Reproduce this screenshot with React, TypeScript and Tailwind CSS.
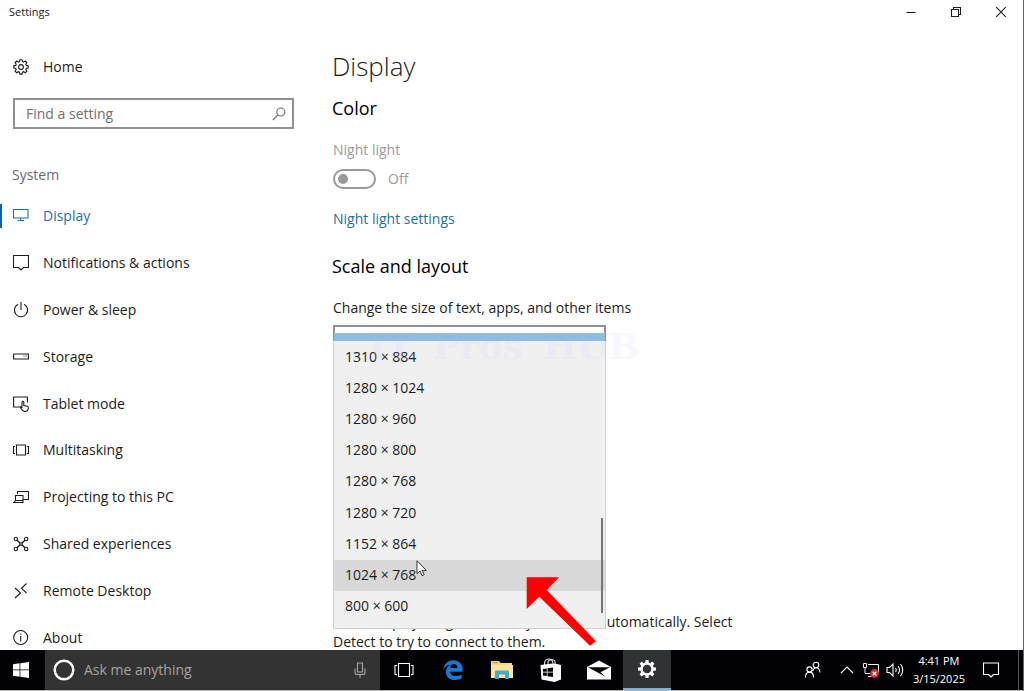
import { useState } from 'react';
import type { ReactNode } from 'react';

interface NavItem {
    name: string;
    icon: ReactNode;
}

interface IconProps {
    children: ReactNode;
    size?: number;
}

function LineIcon({ children, size = 16 }: IconProps) {
    return (
        <svg width={size} height={size} viewBox={`0 0 ${size} ${size}`} fill="none" stroke="currentColor" strokeWidth="1.1" className="shrink-0" aria-hidden="true">
            {children}
        </svg>
    );
}

const gearPath = "M6.9 .7h2.2l.4 1.9 1.2.5 1.6-1.1 1.6 1.6-1.1 1.6.5 1.2 1.9.4v2.2l-1.9.4-.5 1.2 1.1 1.6-1.6 1.6-1.6-1.1-1.2.5-.4 1.9H6.9l-.4-1.9-1.2-.5-1.6 1.1-1.6-1.6 1.1-1.6-.5-1.2-1.9-.4V6.8l1.9-.4.5-1.2-1.1-1.6 1.6-1.6 1.6 1.1 1.2-.5z";

const navItems: NavItem[] = [
    { name: 'Display', icon: <LineIcon><path d="M.5 1.5h14.5v8.5H.5zM7.7 10v2.5M4.5 12.5h6.500" /></LineIcon> },
    { name: 'Notifications & actions', icon: <LineIcon><path d="M.5 .5h15v12h-5L8 15 5.5 12.500h-5z" /></LineIcon> },
    { name: 'Power & sleep', icon: <LineIcon><path d="M8 0v8M5 2.2a6.600 6.600 0 1 0 6 0" /></LineIcon> },
    { name: 'Storage', icon: <LineIcon><path d="M.6 5h14.800v5H.6z" /><path d="M10.500 7h1M12.700 7h1" /></LineIcon> },
    { name: 'Tablet mode', icon: <LineIcon><path d="M7 11H.6V1h13.800v5.500M9 12V6q.9-1.400 1.800 0v3.500l3.500.8q1 .3 1 1.400-.1 3.800-3.300 3.800-2.300 0-3.800-2.700l-1-1.600q.9-.9 2 .5" /></LineIcon> },
    { name: 'Multitasking', icon: <LineIcon><path d="M3.500 3h9v10h-9zM2 4.500H.5v7H2M14 4.500h1.500v7H14" /></LineIcon> },
    { name: 'Projecting to this PC', icon: <LineIcon><path d="M4.500 5V2.500h11v8H10M2.500 6.500H10v5H2.500zM0 13.500h10.500M2.500 11.500l-1.500 2M10 11.500v2" /></LineIcon> },
    { name: 'Shared experiences', icon: <LineIcon><circle cx="2.800" cy="3" r="1.700" /><circle cx="13.200" cy="3" r="1.700" /><circle cx="2.800" cy="13" r="1.700" /><circle cx="13.200" cy="13" r="1.700" /><circle cx="8" cy="8" r="1.300" /><path d="M4 4.200 7 7M12 4.200 9 7M4 11.800 7 9M12 11.800 9 9" strokeWidth="1.400" /></LineIcon> },
    { name: 'Remote Desktop', icon: <LineIcon><path d="M2 5l5.500 5L2 15M13.500 .5 8.500 5.300l5 4.700" /></LineIcon> },
    { name: 'About', icon: <LineIcon><circle cx="7.700" cy="7.500" r="7" /><path d="M7.700 6v5.500M7.700 3.500v1.300" /></LineIcon> },
];

const resolutions = ['1310 × 884', '1280 × 1024', '1280 × 960', '1280 × 800', '1280 × 768', '1280 × 720', '1152 × 864', '1024 × 768', '800 × 600'];

function TitleBar() {
    return (
        <header className="flex h-6 shrink-0 items-center justify-between pl-[9px] text-[11px]">
            <span>Settings</span>
            <div className="flex">
                <button aria-label="Minimize" className="flex w-[45px] justify-center">
                    <LineIcon size={12}><path d="M1.500 6.500h9" /></LineIcon>
                </button>
                <button aria-label="Restore" className="flex w-[45px] justify-center">
                    <LineIcon size={12}><path d="M1.500 3.500h7v7h-7zM3.500 3.500v-2h7v7h-2" /></LineIcon>
                </button>
                <button aria-label="Close" className="flex w-[45px] justify-center">
                    <LineIcon size={12}><path d="M1.200 1.200l9.600 9.600M10.800 1.200 1.200 10.800" /></LineIcon>
                </button>
            </div>
        </header>
    );
}

function Sidebar() {
    return (
        <aside className="w-[308px] shrink-0 pt-[33px]">
            <a href="#home" className="flex h-5 items-center gap-[14px] pl-[13px]">
                <LineIcon><path d={gearPath} /><circle cx="8" cy="8" r="2.400" /></LineIcon>
                Home
            </a>
            <div className="mt-[21px] ml-[13px] flex h-[31px] w-[281px] items-center border-2 border-[#919191] pr-[6px] pl-[11px] text-[#707070]">
                <input aria-label="Find a setting" placeholder="Find a setting" className="min-w-0 flex-1 outline-none placeholder:text-[#707070]" />
                <LineIcon size={14}><circle cx="8.800" cy="5" r="4" /><path d="M6 8 .8 13" /></LineIcon>
            </div>
            <h2 className="mt-[36px] pl-3 leading-5 text-[#6b6b6b]">System</h2>
            <nav className="mt-2 flex h-[468px] flex-col">
                {navItems.map((item, index) => (
                    <a
                        key={item.name}
                        href="#settings"
                        className={index === 0 ? 'relative flex flex-1 items-center gap-[14px] pl-[13px] text-[#1e709f]' : 'flex flex-1 items-center gap-[14px] pl-[13px]'}
                    >
                        {index === 0 && <span className="absolute left-0 h-6 w-[2px] bg-[#0f5fae]" />}
                        {item.icon}
                        {item.name}
                    </a>
                ))}
            </nav>
        </aside>
    );
}

function ResolutionMenu() {
    return (
        <div className="absolute top-2 left-0 z-10 w-full">
            <div className="mx-px h-2 bg-[#8fbce0]" />
            <div className="relative h-72 border border-t-0 border-[#d2d2d2] bg-[#f0f0f0]">
                <ul role="listbox" aria-label="Resolution" className="flex h-[281px] flex-col">
                    {resolutions.map((resolution) => (
                        <li
                            key={resolution}
                            role="option"
                            aria-selected={resolution === '1024 × 768'}
                            className={resolution === '1024 × 768' ? 'flex flex-1 items-center bg-[#d8d8d8] pl-[11px]' : 'flex flex-1 items-center pl-[11px]'}
                        >
                            {resolution}
                        </li>
                    ))}
                </ul>
                <div className="absolute top-[177px] right-[2px] h-[95px] w-[2px] bg-[#757575]" />
            </div>
            <div className="pointer-events-none absolute -top-1 left-9 flex gap-5 font-['DejaVu_Serif',serif] text-[36px] leading-[34px] font-bold whitespace-nowrap text-[#c0c0ff]/15">
                <span>IT</span>
                <span>Pros</span>
                <span>HUB</span>
            </div>
            {/* mouse pointer */}
            <svg width="12" height="18" viewBox="0 0 12 18" className="absolute top-[227px] left-[83px]" aria-hidden="true">
                <path d="M1 .8v13l3-2.800 2 4.700 2.200-1-2-4.400h4z" fill="#fff" stroke="#333" strokeWidth="1" />
            </svg>
            <svg width="72" height="70" viewBox="0 0 72 70" className="absolute top-[244px] left-[193px]" aria-hidden="true">
                <path d="M.7.3H33L20.700 13 70 64.300 64 68.700 13.300 19.700.7 32z" fill="#fe0000" />
            </svg>
        </div>
    );
}

function DisplaySettings() {
    const [nightLight, setNightLight] = useState(false);

    return (
        <main className="min-w-0 flex-1 pt-[26px] pl-6">
            <h1 className="text-[26px] leading-8 font-light">Display</h1>
            <h2 className="mt-[14px] text-lg leading-6 text-black">Color</h2>
            <p className="mt-5 pl-px leading-5 text-[#9b9b9b]" id="night-light">Night light</p>
            <div className="mt-[9px] flex items-center gap-3 pl-px leading-5 text-[#9b9b9b]">
                <button
                    role="switch"
                    aria-checked={nightLight}
                    aria-labelledby="night-light"
                    onClick={() => setNightLight(!nightLight)}
                    className="flex h-5 w-[43px] items-center rounded-full border-2 border-[#999] pl-[3px]"
                >
                    <span className="size-[10px] rounded-full bg-[#999]" />
                </button>
                <span>{nightLight ? 'On' : 'Off'}</span>
            </div>
            <a href="#night-light-settings" className="mt-5 block pl-px leading-5 text-[#1e709f]">Night light settings</a>
            <h2 className="mt-[25px] text-lg leading-6 text-black">Scale and layout</h2>
            <label htmlFor="scale" className="mt-5 block pl-px leading-5">Change the size of text, apps, and other items</label>
            <div className="relative mt-[7px] ml-px w-[273px]">
                <select id="scale" className="block h-[31px] w-full appearance-none border-2 border-[#919191] bg-white px-2">
                    <option>100%</option>
                </select>
                <ResolutionMenu />
            </div>
            <p className="mt-64 max-w-[410px] pl-px leading-5">Older displays might not always connect automatically. Select Detect to try to connect to them.</p>
        </main>
    );
}

function Taskbar() {
    return (
        <footer className="z-20 flex h-[41px] shrink-0 border-b border-[#b5b5b5] bg-[#020206] text-white">
            <button aria-label="Start" className="flex w-[45px] shrink-0 items-center justify-center pr-[3px]">
                <svg width="16" height="16" viewBox="0 0 16 16" fill="#fff">
                    <path d="M0 2.300 6.600 1.300v6.300H0zM7.300 1.200 16 0v7.600H7.300zM0 8.300h6.600v6.400L0 13.700zM7.300 8.300H16V16l-8.700-1.200z" />
                </svg>
            </button>
            <div className="flex w-[335px] items-center bg-[#333] pr-3 pl-2">
                <svg width="22" height="22" viewBox="0 0 22 22" className="shrink-0" fill="none" aria-hidden="true">
                    <circle cx="11" cy="11" r="9.300" stroke="#fff" strokeWidth="2.500" />
                </svg>
                <input aria-label="Ask me anything" placeholder="Ask me anything" className="ml-[9px] min-w-0 flex-1 outline-none placeholder:text-[#a5a5a5]" />
                <button aria-label="Voice search" className="text-[#aaa]">
                    <LineIcon size={16}><path d="M5.500 1h5v9h-5zM3 6.500v4q0 2 2 2h6q2 0 2-2v-4M8 12.500V16" /></LineIcon>
                </button>
            </div>
            <button aria-label="Task View" className="flex w-[47px] items-center justify-center">
                <LineIcon size={20}><path d="M4.500 3.500h11v13h-11zM3 5.500H1v9h2M17 5.500h2v9h-2" /></LineIcon>
            </button>
            <button aria-label="Edge" className="flex w-[49px] items-center justify-center pl-[3px]">
                <svg width="20" height="20" viewBox="0 0 20 20">
                    <path d="M.4 9.300C1.200 3.600 5.100.2 10.300.2c6 0 9.400 4.300 9.400 9.400v2.200H7.100c.2 3 2.700 4.300 5.500 4.300 2.200 0 4.200-.6 6-1.700v4.200c-2 1-4.200 1.400-6.600 1.400-5.400 0-9.100-3.200-9.100-8.100 0-3.300 1.800-6 4.700-7.500C4.700 4.900 2 6.400.4 9.300zM7.200 8.100h7.200c0-2.500-1.300-4-3.500-4S7.500 5.700 7.200 8.100z" fill="#1979d2" />
                </svg>
            </button>
            <button aria-label="File Explorer" className="flex w-[49px] items-center justify-center pl-[2px]">
                <svg width="22" height="20" viewBox="0 0 22 20">
                    <path d="M0 1h8l1.500 2H21v15H0z" fill="#f5d77d" />
                    <path d="M1.500 2.200h5.500v1H1.500z" fill="#b98f31" />
                    <path d="M0 5h22v13H0z" fill="#fbe59d" />
                    <path d="M4 19v-7.500q0-1 1-1h12q1 0 1 1V19h-4v-4.500H8V19z" fill="#45a9c9" />
                </svg>
            </button>
            <button aria-label="Store" className="flex w-[49px] items-center justify-center pl-[2px]">
                <svg width="22" height="24" viewBox="0 0 22 24">
                    <path d="M4.500 7V4.500Q5.500 1 9 1q3 0 4 4M8 6V4q1-2.500 4-2.500 3 .3 3.500 4" fill="none" stroke="#ddd" strokeWidth="1.100" />
                    <path d="M.5 7 14 5.300 21 7v14.500L14.500 24 1.500 21.500z" fill="#fff" />
                    <path d="M3 10.900l3.800-.5v3.400H3zM7.500 10.300l5.500-.8v4.300H7.500zM3 14.500h3.800v3.600L3 17.600zM7.500 14.500H13V19l-5.500-.8z" fill="#050508" />
                </svg>
            </button>
            <button aria-label="Mail" className="flex w-[49px] items-center justify-center">
                <svg width="24" height="20" viewBox="0 0 24 20">
                    <path d="M0 7 12 .5 24 7v12.500H0z" fill="#fff" />
                    <path d="M1 7.200h22l-9.500 5 5 4.500L1 7.200z" fill="#08080b" />
                </svg>
            </button>
            <button aria-label="Settings" className="flex w-12 items-center justify-center border-b-2 border-[#80addb] bg-[#303236]">
                <svg width="18" height="18" viewBox="0 0 16 16" fill="#fff" fillRule="evenodd">
                    <path d="M6.700 0h2.600l.3 2.300 1.300.5L12.700 1.400l1.900 1.900-1.400 1.800.5 1.300 2.300.3v2.600l-2.300.3-.5 1.300 1.400 1.800-1.900 1.900-1.800-1.400-1.300.5-.3 2.300H6.700l-.3-2.300-1.300-.5-1.800 1.400-1.900-1.900 1.400-1.800-.5-1.300L0 9.300V6.700l2.300-.3.5-1.300L1.400 3.300l1.900-1.900 1.800 1.400 1.300-.5zM8 4.200a3.800 3.800 0 1 0 0 7.600 3.800 3.800 0 0 0 0-7.600z" />
                </svg>
            </button>
            <div className="ml-auto flex items-center">
                <button aria-label="People" className="mr-[18px]">
                    <LineIcon size={18}><circle cx="5.500" cy="8.500" r="2.600" /><path d="M1.500 16.500q0-5.400 4-5.400t4 5.400" /><circle cx="12" cy="4" r="2.800" /><path d="M8.700 10q1-3.200 3.500-3.200 3.200 0 3.800 4.700" /></LineIcon>
                </button>
                <button aria-label="Show hidden icons" className="mr-2">
                    <LineIcon size={14}><path d="M1 10l6-6 6 6" /></LineIcon>
                </button>
                <button aria-label="Network" className="mr-[6px]">
                    <svg width="18" height="18" viewBox="0 0 18 18" fill="none" stroke="#eee">
                        <path d="M1.500 2.500h3v4h-3zM6 3.500h10.500v8M3 7v5.500h6M6 15.500h4" />
                        <circle cx="12.500" cy="12.500" r="4.500" fill="#cf2636" stroke="none" />
                        <path d="M10.700 10.700l3.600 3.600M14.300 10.700l-3.600 3.600" stroke="#fff" strokeWidth="1.300" />
                    </svg>
                </button>
                <button aria-label="Volume" className="mr-[9px]">
                    <LineIcon size={18}><path d="M1 6.500h2.500L7 3v12l-3.500-3.500H1zM9.500 7q1.500 2 0 4M12 5q3 4 0 8M14.500 3q4.500 6 0 12" /></LineIcon>
                </button>
                <div className="text-center text-[11px] leading-[18px]">
                    <p>4:41 PM</p>
                    <p>3/15/2025</p>
                </div>
                <button aria-label="Action center" className="mr-[18px] ml-[17px]">
                    <LineIcon size={18}><path d="M1.500 2h15v11.500h-5L9 16l-2.500-2.500h-5z" /></LineIcon>
                </button>
                <div className="h-10 w-[5px] border-l border-[#555]" />
            </div>
        </footer>
    );
}

export default function App() {
    return (
        <div className="flex h-screen flex-col overflow-hidden border-r border-[#666] bg-white font-['Open_Sans',sans-serif] text-sm text-[#1c1c1c]">
            <TitleBar />
            <div className="flex min-h-0 flex-1">
                <Sidebar />
                <DisplaySettings />
            </div>
            <Taskbar />
        </div>
    );
}
